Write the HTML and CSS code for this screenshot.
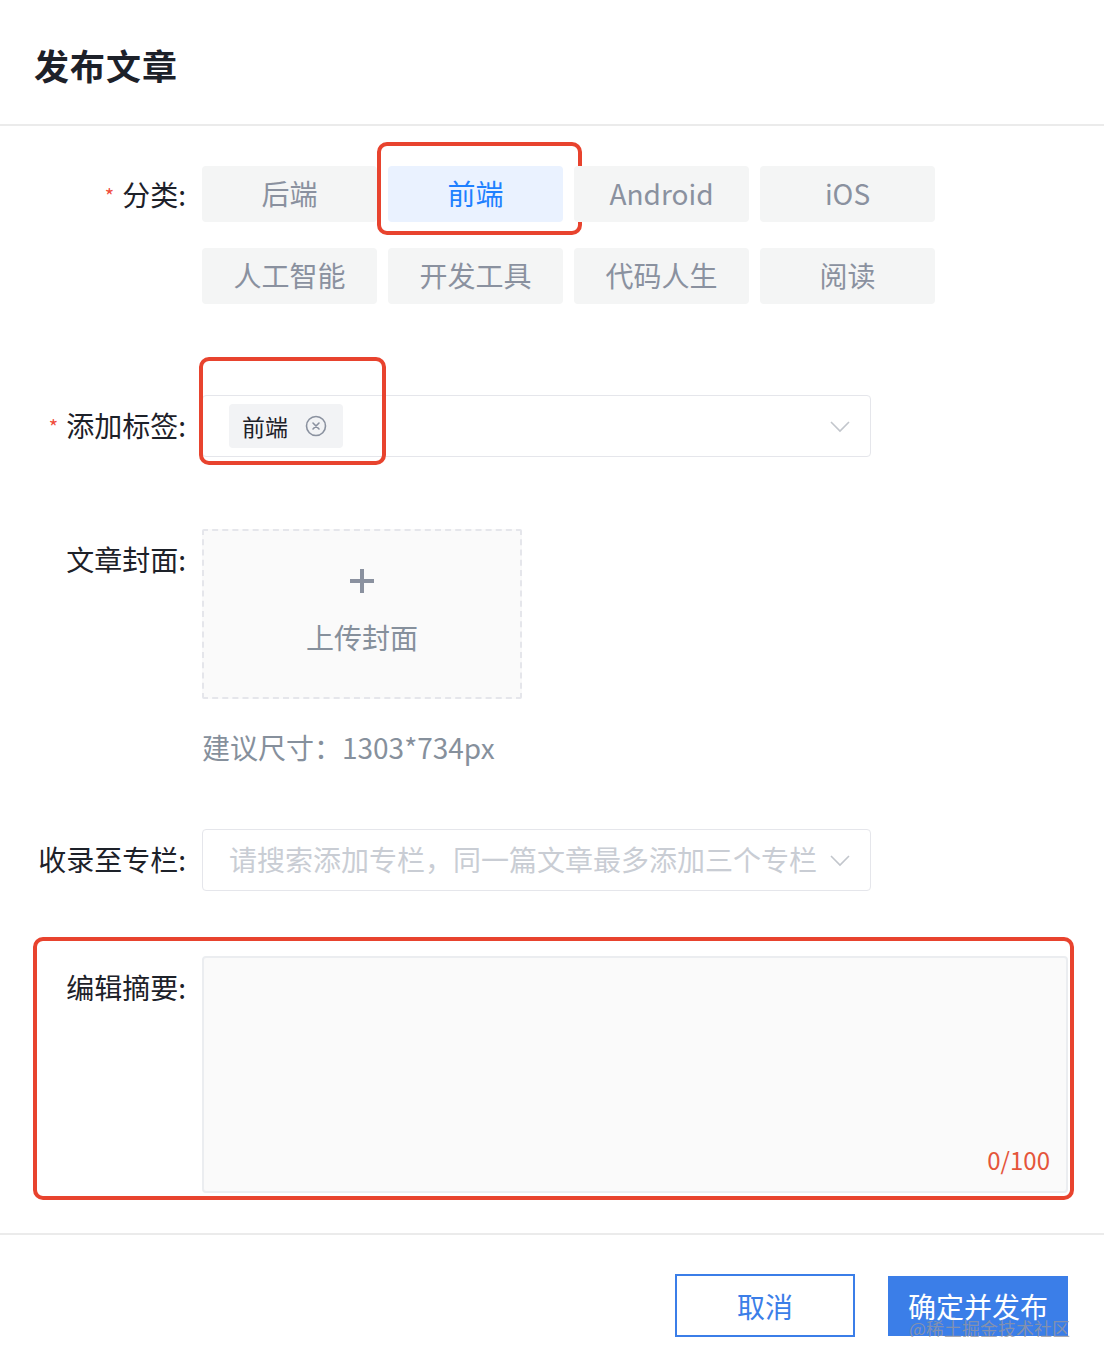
FILE: index.html
```html
<!DOCTYPE html>
<html lang="zh-CN">
<head>
    <meta charset="UTF-8">
    <meta name="viewport" content="width=device-width, initial-scale=1.0">
    <title>发布文章</title>
    <link rel="stylesheet" href="styles.css">
</head>
<body>
    <div class="dialog">
        <div class="dialog-header">
            <h1 class="title">发布文章</h1>
        </div>

        <div class="dialog-body">
            <!-- 分类 -->
            <div class="form-item item-category">
                <label class="form-label"><span class="required">*</span>分类:</label>
                <div class="category-grid">
                    <div class="category">后端</div>
                    <div class="category active">前端<span class="mark mark-category"></span></div>
                    <div class="category">Android</div>
                    <div class="category">iOS</div>
                    <div class="category">人工智能</div>
                    <div class="category">开发工具</div>
                    <div class="category">代码人生</div>
                    <div class="category">阅读</div>
                </div>
            </div>

            <!-- 标签 -->
            <div class="form-item item-tags">
                <label class="form-label"><span class="required">*</span>添加标签:</label>
                <div class="select">
                    <span class="mark mark-tag"></span>
                    <span class="tag">前端
                        <svg class="tag-close" width="22" height="22" viewBox="0 0 22 22">
                            <circle cx="11" cy="11" r="9.5" fill="none" stroke="#8a919f" stroke-width="1.6"/>
                            <path d="M8 8 L14 14 M14 8 L8 14" stroke="#8a919f" stroke-width="1.6" stroke-linecap="round"/>
                        </svg>
                    </span>
                    <svg class="chevron" width="20" height="12" viewBox="0 0 20 12">
                        <path d="M1 1 L10 10 L19 1" fill="none" stroke="#c2c6cc" stroke-width="1.6"/>
                    </svg>
                </div>
            </div>

            <!-- 封面 -->
            <div class="form-item item-cover">
                <label class="form-label">文章封面:</label>
                <div class="cover-col">
                    <div class="upload">
                        <svg width="28" height="28" viewBox="0 0 28 28">
                            <path d="M14 2 V26 M2 14 H26" stroke="#8a919f" stroke-width="4"/>
                        </svg>
                        <span class="upload-text">上传封面</span>
                    </div>
                    <div class="hint">建议尺寸：1303*734px</div>
                </div>
            </div>

            <!-- 专栏 -->
            <div class="form-item item-column">
                <label class="form-label">收录至专栏:</label>
                <div class="select">
                    <span class="placeholder">请搜索添加专栏，同一篇文章最多添加三个专栏</span>
                    <svg class="chevron" width="20" height="12" viewBox="0 0 20 12">
                        <path d="M1 1 L10 10 L19 1" fill="none" stroke="#c2c6cc" stroke-width="1.6"/>
                    </svg>
                </div>
            </div>

            <!-- 摘要 -->
            <div class="form-item item-summary">
                <span class="mark mark-summary"></span>
                <label class="form-label">编辑摘要:</label>
                <div class="textarea">
                    <span class="counter">0/100</span>
                </div>
            </div>
        </div>

        <div class="dialog-footer">
            <button class="btn btn-cancel">取消</button>
            <button class="btn btn-primary">确定并发布<span class="watermark">@稀土掘金技术社区</span></button>
        </div>
    </div>
</body>
</html>
```

FILE: styles.css
```css
* {
    box-sizing: border-box;
}
body {
    margin: 0;
    background: #fff;
    font-family: "Noto Sans CJK SC", "Noto Sans", sans-serif;
    color: #1d2129;
}
.dialog-header {
    height: 126px;
    padding: 0 34px;
    display: flex;
    align-items: center;
    border-bottom: 2px solid #ebebeb;
}
.title {
    margin: 0;
    font-size: 35px;
    font-weight: 700;
    color: #1d2129;
    letter-spacing: 1px;
    position: relative;
    top: 2px;
}
.dialog-body {
    padding: 0 36px 0 0;
}
.form-item {
    display: flex;
    align-items: flex-start;
    position: relative;
}
.form-label {
    width: 202px;
    flex-shrink: 0;
    padding-right: 16px;
    text-align: right;
    font-size: 28px;
    color: #1d2129;
    line-height: 56px;
    white-space: nowrap;
}
.required {
    color: #f04c3b;
    font-size: 20px;
    margin-right: 8px;
    position: relative;
    top: -2px;
}
.item-category {
    margin-top: 40px;
}
.category-grid {
    display: grid;
    grid-template-columns: repeat(4, 175px);
    column-gap: 11px;
    row-gap: 26px;
}
.category {
    height: 56px;
    display: flex;
    align-items: center;
    justify-content: center;
    background: #f4f5f5;
    border-radius: 4px;
    font-size: 28px;
    color: #8a919f;
    position: relative;
    padding-bottom: 3px;
}
.category.active {
    background: #eaf2ff;
    color: #1e80ff;
}
.mark {
    position: absolute;
    border: 4px solid #e8432e;
    border-radius: 10px;
    pointer-events: none;
}
.mark-category {
    left: -11px;
    top: -24px;
    width: 205px;
    height: 93px;
}
.item-tags {
    margin-top: 91px;
}
.item-tags .form-label,
.item-column .form-label {
    line-height: 60px;
}
.select {
    position: relative;
    width: 669px;
    height: 62px;
    border: 1px solid #e5e6eb;
    border-radius: 4px;
    display: flex;
    align-items: center;
    padding-left: 26px;
}
.tag {
    height: 44px;
    width: 114px;
    background: #f2f3f5;
    border-radius: 4px;
    display: flex;
    align-items: center;
    padding-left: 13px;
    font-size: 23px;
    color: #1d2129;
}
.tag-close {
    margin-left: 17px;
}
.chevron {
    position: absolute;
    right: 20px;
    top: 25px;
}
.mark-tag {
    left: -4px;
    top: -39px;
    width: 187px;
    height: 108px;
}
.item-cover {
    margin-top: 70px;
}
.item-cover .form-label {
    line-height: 60px;
}
.upload {
    width: 320px;
    height: 170px;
    border: 2px dashed #e5e6eb;
    background: #fafafa;
    border-radius: 2px;
    display: flex;
    flex-direction: column;
    align-items: center;
    padding-top: 36px;
}
.upload-text {
    margin-top: 22px;
    font-size: 28px;
    color: #86909c;
}
.hint {
    margin-top: 30px;
    font-size: 28px;
    line-height: 36px;
    color: #86909c;
}
.item-column {
    margin-top: 64px;
}
.placeholder {
    font-size: 28px;
    color: #c9cdd4;
    padding-bottom: 3px;
}
.item-summary {
    margin-top: 65px;
}
.item-summary .form-label {
    line-height: 62px;
}
.textarea {
    position: relative;
    flex: 1;
    height: 237px;
    border: 2px solid #ebedf0;
    border-radius: 4px;
    background: #fafafa;
}
.counter {
    position: absolute;
    right: 16px;
    bottom: 14px;
    font-size: 24px;
    color: #e5553a;
}
.mark-summary {
    left: 33px;
    top: -19px;
    width: 1041px;
    height: 263px;
}
.dialog-footer {
    margin-top: 40px;
    border-top: 2px solid #ebebeb;
    display: flex;
    justify-content: flex-end;
    gap: 33px;
    padding: 39px 36px 0 0;
}
.btn {
    width: 180px;
    height: 63px;
    font-family: inherit;
    font-size: 28px;
    cursor: pointer;
    border-radius: 0;
    position: relative;
}
.btn-cancel {
    background: #fff;
    border: 2px solid #3b7ee8;
    color: #3b7ee8;
}
.btn-primary {
    background: #3b7ee8;
    border: none;
    color: #fff;
    height: 60px;
    margin-top: 2px;
    padding-bottom: 2px;
}
.watermark {
    position: absolute;
    left: 21px;
    bottom: -3px;
    font-size: 18px;
    color: rgba(150, 150, 160, 0.8);
    white-space: nowrap;
    line-height: 22px;
}
```
